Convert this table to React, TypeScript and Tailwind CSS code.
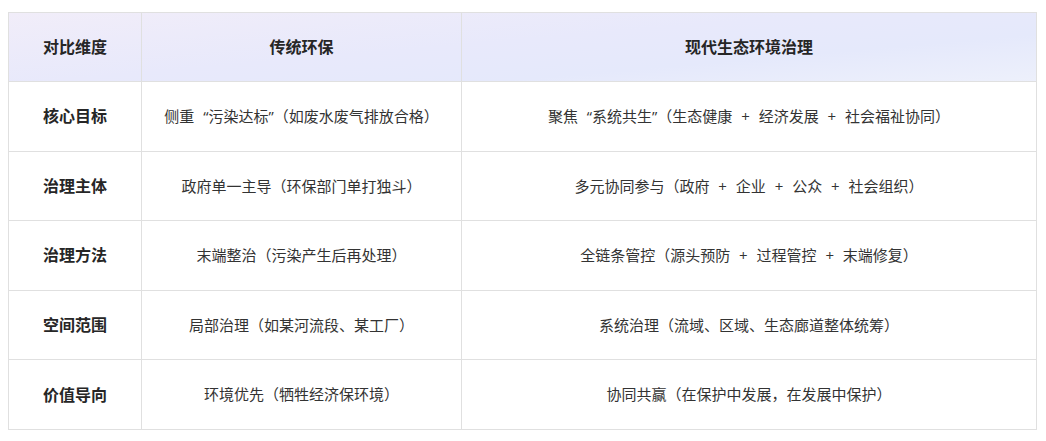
const ROWS = [
  {
    label: "核心目标",
    traditional: "侧重 “污染达标”（如废水废气排放合格）",
    modern: "聚焦 “系统共生”（生态健康 + 经济发展 + 社会福祉协同）",
  },
  {
    label: "治理主体",
    traditional: "政府单一主导（环保部门单打独斗）",
    modern: "多元协同参与（政府 + 企业 + 公众 + 社会组织）",
  },
  {
    label: "治理方法",
    traditional: "末端整治（污染产生后再处理）",
    modern: "全链条管控（源头预防 + 过程管控 + 末端修复）",
  },
  {
    label: "空间范围",
    traditional: "局部治理（如某河流段、某工厂）",
    modern: "系统治理（流域、区域、生态廊道整体统筹）",
  },
  {
    label: "价值导向",
    traditional: "环境优先（牺牲经济保环境）",
    modern: "协同共赢（在保护中发展，在发展中保护）",
  },
];

const FONT = "font-['Open_Sans','Noto_Sans_CJK_SC',sans-serif]";
const CELL = "border border-[#e0e0e0] text-center";
const BODY = `${CELL} text-[15px] text-[#333333] [word-spacing:5px] [text-spacing-trim:space-all]`;

export default function App() {
  return (
    <main className={`min-h-screen bg-white pl-2 pr-[10px] pt-3 ${FONT}`}>
      <table className="w-[1028px] table-fixed border-collapse border border-[#e0e0e0]">
        <colgroup>
          <col className="w-[133px]" />
          <col className="w-[320px]" />
          <col className="w-[575px]" />
        </colgroup>
        <thead>
          <tr className="h-[69px] bg-[linear-gradient(175deg,#f1edf9_0%,#e8e9fb_45%,#e5e9fb_70%,#edf0fb_100%)]">
            <th className={`${CELL} text-[16px] font-bold text-[#262626]`}>对比维度</th>
            <th className={`${CELL} text-[16px] font-bold text-[#262626]`}>传统环保</th>
            <th className={`${CELL} text-[16px] font-bold text-[#262626]`}>现代生态环境治理</th>
          </tr>
        </thead>
        <tbody>
          {ROWS.map((row) => (
            <tr key={row.label} className="h-[69.6px]">
              <td className={`${CELL} text-[16px] font-bold text-[#262626]`}>{row.label}</td>
              <td className={BODY}>{row.traditional}</td>
              <td className={BODY}>{row.modern}</td>
            </tr>
          ))}
        </tbody>
      </table>
    </main>
  );
}
